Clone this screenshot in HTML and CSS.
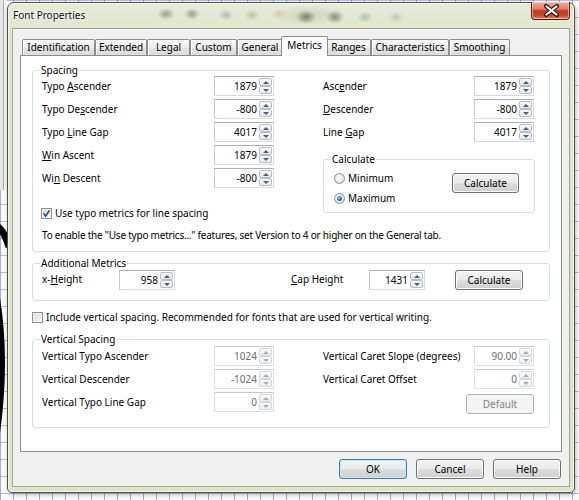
FILE: index.html
```html
<!DOCTYPE html>
<html>
<head>
<meta charset="utf-8">
<title>Font Properties</title>
<link rel="stylesheet" href="styles.css">
</head>
<body>
<div class="desktop">
  <div class="desk-strip"></div>
  <svg class="ink" width="8" height="500" viewBox="0 0 8 500">
    <path d="M-6 225 Q3 227 9 247" stroke="#000" stroke-width="7" fill="none"/>
    <path d="M-4 292 Q8 360 -4 440" stroke="#000" stroke-width="6" fill="none"/>
  </svg>
  <div class="window">
    <div class="titlebar">
      <span class="title">Font Properties</span>
      <div class="close">
        <svg width="39" height="18" viewBox="0 0 39 18">
          <path d="M15 5 L26 14 M26 5 L15 14" stroke="#3a1a12" stroke-width="4.2" stroke-linecap="round"/>
          <path d="M15.5 5.5 L25.5 13.5 M25.5 5.5 L15.5 13.5" stroke="#fff" stroke-width="2.2" stroke-linecap="round"/>
        </svg>
      </div>
    </div>
    <div class="client">
      <div class="tabs">
        <div class="tab t-ident">Identification</div>
        <div class="tab t-ext">Extended</div>
        <div class="tab t-legal">Legal</div>
        <div class="tab t-custom">Custom</div>
        <div class="tab t-general">General</div>
        <div class="tab t-metrics active">Metrics</div>
        <div class="tab t-ranges">Ranges</div>
        <div class="tab t-char">Characteristics</div>
        <div class="tab t-smooth">Smoothing</div>
      </div>
      <div class="panel">
        <fieldset class="group spacing">
          <legend>Spacing</legend>
          <div class="cols">
            <div class="col-left">
              <div class="row"><span class="lbl">Typo <u>A</u>scender</span><div class="spin"><span class="val">1879</span><span class="arrows"><i class="up"></i><i class="dn"></i></span></div></div>
              <div class="row"><span class="lbl">Typo De<u>s</u>cender</span><div class="spin"><span class="val">-800</span><span class="arrows"><i class="up"></i><i class="dn"></i></span></div></div>
              <div class="row"><span class="lbl">Typo <u>L</u>ine Gap</span><div class="spin"><span class="val">4017</span><span class="arrows"><i class="up"></i><i class="dn"></i></span></div></div>
              <div class="row"><span class="lbl"><u>W</u>in Ascent</span><div class="spin"><span class="val">1879</span><span class="arrows"><i class="up"></i><i class="dn"></i></span></div></div>
              <div class="row"><span class="lbl">Wi<u>n</u> Descent</span><div class="spin"><span class="val">-800</span><span class="arrows"><i class="up"></i><i class="dn"></i></span></div></div>
              <div class="check-row use-typo">
                <span class="cb"><svg width="9" height="9" viewBox="0 0 9 9"><path d="M1.5 4.5 L3.6 7 L7.6 1.2" stroke="#2c4f96" stroke-width="1.7" fill="none"/></svg></span>
                <span>Use typo metrics for line spacing</span>
              </div>
            </div>
            <div class="col-right">
              <div class="row"><span class="lbl">Asc<u>e</u>nder</span><div class="spin"><span class="val">1879</span><span class="arrows"><i class="up"></i><i class="dn"></i></span></div></div>
              <div class="row"><span class="lbl"><u>D</u>escender</span><div class="spin"><span class="val">-800</span><span class="arrows"><i class="up"></i><i class="dn"></i></span></div></div>
              <div class="row"><span class="lbl">Line <u>G</u>ap</span><div class="spin"><span class="val">4017</span><span class="arrows"><i class="up"></i><i class="dn"></i></span></div></div>
              <fieldset class="group calc">
                <legend>Calculate</legend>
                <div class="calc-body">
                  <div class="radios">
                    <div class="radio-row"><span class="rb"></span><span>Minimum</span></div>
                    <div class="radio-row"><span class="rb on"></span><span>Maximum</span></div>
                  </div>
                  <div class="btn calc-btn">Calculate</div>
                </div>
              </fieldset>
            </div>
          </div>
          <p class="note">To enable the "Use typo metrics..." features, set Version to 4 or higher on the General tab.</p>
        </fieldset>

        <fieldset class="group additional">
          <legend>Additional Metrics</legend>
          <div class="add-row">
            <span class="lbl add-lbl">x-<u>H</u>eight</span>
            <div class="spin narrow"><span class="val">958</span><span class="arrows"><i class="up"></i><i class="dn"></i></span></div>
            <span class="lbl add-lbl cap"><u>C</u>ap Height</span>
            <div class="spin narrow"><span class="val">1431</span><span class="arrows"><i class="up"></i><i class="dn"></i></span></div>
            <div class="btn add-btn">Calculate</div>
          </div>
        </fieldset>

        <div class="check-row include">
          <span class="cb"></span>
          <span>Include vertical spacing. Recommended for fonts that are used for vertical writing.</span>
        </div>

        <fieldset class="group vertical">
          <legend>Vertical Spacing</legend>
          <div class="cols">
            <div class="col-left">
              <div class="row"><span class="lbl">Vertical Typo Ascender</span><div class="spin dis"><span class="val">1024</span><span class="arrows"><i class="up"></i><i class="dn"></i></span></div></div>
              <div class="row"><span class="lbl">Vertical Descender</span><div class="spin dis"><span class="val">-1024</span><span class="arrows"><i class="up"></i><i class="dn"></i></span></div></div>
              <div class="row"><span class="lbl">Vertical Typo Line Gap</span><div class="spin dis"><span class="val">0</span><span class="arrows"><i class="up"></i><i class="dn"></i></span></div></div>
            </div>
            <div class="col-right">
              <div class="row"><span class="lbl">Vertical Caret Slope (degrees)</span><div class="spin dis"><span class="val">90.00</span><span class="arrows"><i class="up"></i><i class="dn"></i></span></div></div>
              <div class="row"><span class="lbl">Vertical Caret Offset</span><div class="spin dis"><span class="val">0</span><span class="arrows"><i class="up"></i><i class="dn"></i></span></div></div>
              <div class="default-wrap"><div class="btn disabled">Default</div></div>
            </div>
          </div>
        </fieldset>
      </div>
      <div class="buttons">
        <div class="btn default">OK</div>
        <div class="btn">Cancel</div>
        <div class="btn">Help</div>
      </div>
    </div>
  </div>
</div>
</body>
</html>
```

FILE: styles.css
```css
* { box-sizing: border-box; }

html, body {
  margin: 0;
  padding: 0;
}

body {
  width: 579px;
  height: 500px;
  overflow: hidden;
  font-family: "Noto Sans", "Open Sans", sans-serif;
  font-size: 10px;
  color: #000;
}

.desktop {
  position: relative;
  width: 579px;
  height: 500px;
  background-color: #fbfbfb;
  background-image:
    linear-gradient(to right, rgba(95, 105, 215, 0.55) 1px, transparent 1px),
    linear-gradient(to bottom, rgba(95, 105, 215, 0.45) 1px, transparent 1px);
  background-size: 13px 17px;
}

.desk-strip {
  position: absolute;
  left: 0;
  top: 0;
  width: 7px;
  height: 190px;
  background: linear-gradient(to right, #e6e6e6 0, #e6e6e6 3px, #a9a9a9 3px, #a9a9a9 4px, #f3f3f3 4px);
}

.ink {
  position: absolute;
  left: 0;
  top: 0;
}

/* ---------- window frame ---------- */
.window {
  position: absolute;
  left: 7px;
  top: 2px;
  width: 568px;
  height: 491px;
  border: 1px solid #4c5146;
  border-radius: 7px 7px 5px 5px;
  padding: 0 4px 5px 4px;
  display: flex;
  flex-direction: column;
  box-shadow: inset 0 0 0 1px rgba(255, 255, 255, 0.65), 1px 2px 4px rgba(0, 0, 0, 0.25);
  background:
    radial-gradient(ellipse 9px 6px at 158px 11px, rgba(85, 105, 75, 0.55), transparent),
    radial-gradient(ellipse 8px 6px at 184px 11px, rgba(80, 92, 75, 0.5), transparent),
    radial-gradient(ellipse 8px 6px at 218px 12px, rgba(105, 140, 140, 0.45), transparent),
    radial-gradient(ellipse 8px 6px at 244px 12px, rgba(110, 140, 95, 0.35), transparent),
    radial-gradient(ellipse 7px 5px at 271px 11px, rgba(195, 140, 120, 0.3), transparent),
    radial-gradient(ellipse 10px 7px at 298px 14px, rgba(65, 70, 60, 0.6), transparent),
    radial-gradient(ellipse 9px 7px at 327px 14px, rgba(70, 76, 64, 0.55), transparent),
    radial-gradient(ellipse 8px 6px at 357px 14px, rgba(110, 150, 150, 0.45), transparent),
    radial-gradient(ellipse 8px 6px at 388px 14px, rgba(120, 160, 150, 0.38), transparent),
    radial-gradient(ellipse 40px 10px at 300px 12px, rgba(160, 175, 140, 0.35), transparent),
    linear-gradient(#e7ebda, #dfe5cb 30px, #dde5c3);
}

.titlebar {
  height: 25px;
  display: flex;
  align-items: flex-start;
  flex: none;
}

.title {
  margin: 5px 0 0 1px;
  line-height: 14px;
  color: #111;
  text-shadow: 0 0 5px #fff, 0 0 3px #fff;
}

.close {
  margin-left: auto;
  margin-top: -1px;
  width: 39px;
  height: 18px;
  border: 1px solid #5a1e14;
  border-top: none;
  border-radius: 0 0 4px 4px;
  background: linear-gradient(#eab0a0 0%, #dc8068 40%, #c33b20 52%, #c6452a 78%, #e18a6e 100%);
  box-shadow: inset 0 0 0 1px rgba(255, 225, 215, 0.55);
}

.close svg { display: block; margin: -1px 0 0 -1px; }

/* ---------- client ---------- */
.client {
  flex: 1;
  background: #f0f0f0;
  border: 1px solid #9fa697;
  padding: 7px;
  display: flex;
  flex-direction: column;
}

.tabs {
  display: flex;
  align-items: flex-end;
  height: 20px;
  margin-bottom: -1px;
  padding-left: 2px;
  flex: none;
}

.tab {
  height: 16px;
  margin-bottom: 1px;
  line-height: 15px;
  text-align: center;
  border: 1px solid #898c95;
  border-bottom: none;
  border-radius: 2px 2px 0 0;
  background: linear-gradient(#f7f7f7 0%, #ececec 50%, #e3e3e3 51%, #dcdcdc 100%);
  box-shadow: inset 1px 1px 0 #ffffff;
  white-space: nowrap;
  flex: none;
}

.t-ident { width: 73px; }
.t-ext { width: 52px; }
.t-legal { width: 43px; }
.t-custom { width: 47px; }
.t-general { width: 46px; }
.t-metrics { width: 43px; }
.t-ranges { width: 45px; }
.t-char { width: 78px; }
.t-smooth { width: 61px; }

.tab.active {
  position: relative;
  z-index: 1;
  width: 47px;
  height: 20px;
  margin: 0 -2px;
  line-height: 17px;
  background: #fff;
  box-shadow: none;
}

.panel {
  flex: 1;
  background: #fff;
  border: 1px solid #898c95;
  padding: 7px 11px 0 11px;
}

/* ---------- group boxes ---------- */
.group {
  margin: 0;
  border: 1px solid #d5dfe5;
  border-radius: 3px;
  padding: 0 14px 9px 9px;
  min-width: 0;
}

.group legend {
  padding: 0 1px;
  margin-left: -2px;
  line-height: 14px;
}

.cols {
  display: flex;
  margin-top: -1px;
}

.col-left { width: 281px; flex: none; }
.col-right { width: 212px; flex: none; }

.row {
  display: flex;
  align-items: center;
  height: 20px;
}

.row + .row { margin-top: 3px; }

.col-left .lbl { width: 172px; }
.col-right .lbl { width: 151px; }

.lbl { white-space: nowrap; line-height: 14px; }

u { text-decoration-thickness: 1px; text-underline-offset: 1px; }

/* ---------- spin edit ---------- */
.spin {
  display: flex;
  width: 60px;
  height: 20px;
  flex: none;
  border: 1px solid #d6dae1;
  border-top-color: #abadb3;
  border-left-color: #c9ccd2;
  background: #fff;
  padding: 1px;
}

.spin.narrow { width: 56px; }

.spin .val {
  flex: 1;
  text-align: right;
  padding-right: 2px;
  line-height: 16px;
  color: #000;
}

.arrows {
  width: 13px;
  display: flex;
  flex-direction: column;
}

.arrows i {
  flex: 1;
  display: flex;
  align-items: center;
  justify-content: center;
  border: 1px solid #b7bcc5;
  border-radius: 2px;
  background: linear-gradient(#f8f9fb, #e6e9ee);
}

.arrows i::before {
  content: "";
  border-left: 3px solid transparent;
  border-right: 3px solid transparent;
}

.arrows .up::before { border-bottom: 3px solid #4b5b80; }
.arrows .dn::before { border-top: 3px solid #4b5b80; }

.spin.dis { border-color: #dcdfe3; border-top-color: #c7c9cd; }
.spin.dis .val { color: #6d6d6d; }
.spin.dis .arrows i { border-color: #d3d6db; background: linear-gradient(#fafafa, #eff0f2); }
.spin.dis .arrows .up::before { border-bottom-color: #a6abb3; }
.spin.dis .arrows .dn::before { border-top-color: #a6abb3; }

/* ---------- checkboxes & radios ---------- */
.check-row {
  display: flex;
  align-items: center;
  height: 14px;
  gap: 3px;
  white-space: nowrap;
}

.use-typo { margin: 18px 0 0 -1px; }

.include { margin-top: 9px; }

.cb {
  width: 11px;
  height: 11px;
  flex: none;
  border: 1px solid #8e8f8f;
  background: linear-gradient(135deg, #d9dbdd, #f8f8f8);
  box-shadow: inset 0 0 0 1px #f4f4f4;
  display: flex;
  align-items: center;
  justify-content: center;
}

.cb svg { display: block; }

.calc {
  margin-top: 10px;
  padding: 0 7px 7px 9px;
}

.calc-body { display: flex; align-items: flex-start; }

.radios { width: 119px; padding-top: 5px; }

.radio-row {
  display: flex;
  align-items: center;
  gap: 3px;
  height: 14px;
  margin-left: 1px;
}

.radio-row + .radio-row { margin-top: 6px; }

.rb {
  width: 11px;
  height: 11px;
  flex: none;
  border-radius: 50%;
  border: 1px solid #8d8f91;
  background: radial-gradient(circle at 45% 40%, #ffffff 0%, #e6e6e6 55%, #cfcfcf 100%);
  display: flex;
  align-items: center;
  justify-content: center;
}

.rb.on::after {
  content: "";
  width: 5px;
  height: 5px;
  border-radius: 50%;
  background: radial-gradient(circle at 40% 35%, #8fc3f2 0%, #2e6fc6 55%, #173f86 100%);
}

/* ---------- buttons ---------- */
.btn {
  width: 68px;
  height: 20px;
  flex: none;
  border: 1px solid #707070;
  border-radius: 3px;
  background: linear-gradient(#f2f2f2 0%, #ebebeb 48%, #dddddd 52%, #cfcfcf 100%);
  box-shadow: inset 0 0 0 1px #fbfbfb;
  text-align: center;
  line-height: 18px;
  color: #000;
}

.calc-btn { width: 67px; margin-top: 7px; }

.btn.default {
  border-color: #3c7fb1;
  box-shadow: inset 0 0 0 1px #c4e5f7;
}

.btn.disabled {
  border-color: #adb2b5;
  background: #f4f4f4;
  box-shadow: none;
  color: #838383;
}

.note {
  margin: 8px 0 0 0;
  line-height: 14px;
  white-space: nowrap;
  letter-spacing: -0.22px;
}

.spacing { padding-bottom: 9px; }

.additional {
  margin-top: 4px;
  padding-bottom: 10px;
}

.add-row {
  display: flex;
  align-items: center;
  height: 20px;
}

.add-lbl { width: 77px; margin-top: -3px; }
.add-lbl.cap { width: 78px; margin-left: 116px; }
.add-btn { margin-left: 30px; margin-top: -1px; }

.vertical {
  margin-top: 8px;
  padding-bottom: 13px;
}

.vertical .cols { margin-top: 0; }

.default-wrap {
  display: flex;
  justify-content: flex-end;
  padding-right: 1px;
  margin-top: 5px;
}

.buttons {
  display: flex;
  justify-content: flex-end;
  gap: 9px;
  margin-top: 7px;
  padding-right: 1px;
  flex: none;
}
```
